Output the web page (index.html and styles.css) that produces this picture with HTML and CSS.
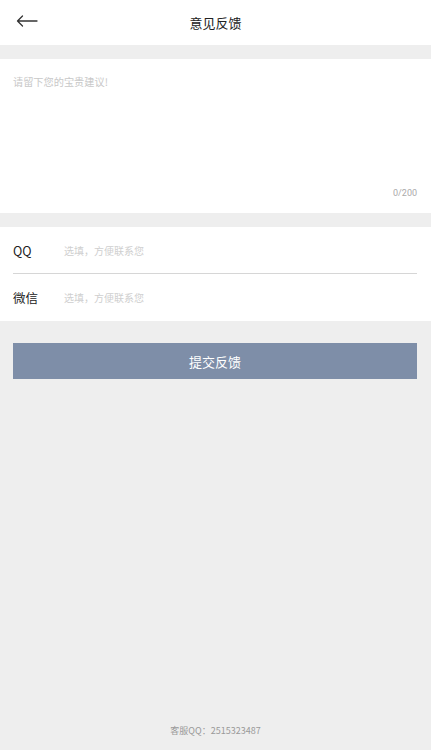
FILE: index.html
```html
<!DOCTYPE html>
<html lang="zh">
<head>
<meta charset="utf-8">
<title>意见反馈</title>
<link rel="stylesheet" href="styles.css">
</head>
<body>
<div class="page">
  <header class="header">
    <span class="back">
      <svg width="22" height="12" viewBox="0 0 22 12"><path d="M21 6H1.5M6.5 1L1.5 6l5 5" fill="none" stroke="#333" stroke-width="1.3" stroke-linecap="round" stroke-linejoin="round"/></svg>
    </span>
    <h1 class="title">意见反馈</h1>
  </header>
  <section class="feedback">
    <div class="placeholder">请留下您的宝贵建议!</div>
    <div class="counter">0/200</div>
  </section>
  <section class="contact">
    <div class="row">
      <span class="label">QQ</span>
      <span class="hint">选填，方便联系您</span>
    </div>
    <div class="divider"></div>
    <div class="row">
      <span class="label">微信</span>
      <span class="hint">选填，方便联系您</span>
    </div>
  </section>
  <div class="submit">提交反馈</div>
  <footer class="footer">客服QQ：2515323487</footer>
</div>
</body>
</html>
```

FILE: styles.css
```css
html, body {
  margin: 0;
  padding: 0;
}
body {
  font-family: "Noto Sans CJK SC", "Noto Sans", sans-serif;
  background: #eeeeee;
  color: #333;
}
.page {
  display: flex;
  flex-direction: column;
  height: 750px;
}
.header {
  height: 45px;
  background: #fff;
  display: flex;
  align-items: center;
  justify-content: center;
  position: relative;
}
.back {
  position: absolute;
  left: 16px;
  top: 15px;
  display: flex;
}
.title {
  margin: 0;
  font-size: 13px;
  font-weight: normal;
  color: #222;
}
.feedback {
  margin-top: 14px;
  height: 154px;
  background: #fff;
  display: flex;
  flex-direction: column;
  padding: 0 14px 0 13px;
  box-sizing: border-box;
}
.placeholder {
  margin-top: 15px;
  font-size: 10.2px;
  color: #c8c8c8;
  line-height: 16px;
}
.counter {
  margin-top: auto;
  margin-bottom: 14px;
  text-align: right;
  font-family: Roboto, "Noto Sans", sans-serif;
  font-size: 9px;
  color: #aaa;
  line-height: 12px;
}
.contact {
  margin-top: 14px;
  background: #fff;
  padding: 0 14px 0 13px;
}
.row {
  height: 46px;
  display: flex;
  align-items: center;
}
.row:last-child {
  height: 47px;
}
.label {
  width: 51px;
  font-size: 12.5px;
  color: #222;
}
.hint {
  font-size: 10px;
  color: #cfcfcf;
}
.divider {
  height: 1px;
  background: #d6d6d6;
}
.submit {
  margin: 22px 14px 0 13px;
  height: 36px;
  background: #7e8ea8;
  color: #fff;
  font-size: 13px;
  display: flex;
  align-items: center;
  justify-content: center;
}
.footer {
  margin-top: auto;
  margin-bottom: 12px;
  text-align: center;
  font-size: 9px;
  color: #999;
  line-height: 14px;
}
```
